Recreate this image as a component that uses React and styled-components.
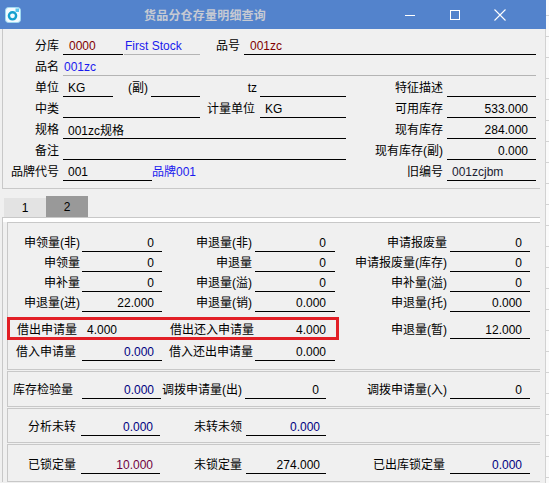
import React from 'react'
import styled, { createGlobalStyle } from 'styled-components'

const GlobalStyle = createGlobalStyle`
  html, body {
    margin: 0;
    padding: 0;
  }
  body {
    width: 549px;
    height: 483px;
    overflow: hidden;
    background: #fafafa;
    color: #000;
    font-family: "Liberation Sans", "Noto Sans CJK SC", sans-serif;
    font-size: 12px;
  }
`

const Screen = styled.div`
  display: flex;
  width: 549px;
  height: 483px;
  overflow: hidden;
`

const Window = styled.div`
  width: 546px;
  flex-shrink: 0;
  display: flex;
  flex-direction: column;
  background: #f0f0f0;
`

const TitleBar = styled.div`
  height: 29px;
  flex-shrink: 0;
  display: flex;
  align-items: center;
  padding-left: 5px;
  background: #5383cc;
`

const Title = styled.div`
  flex: 1;
  margin-left: 123px;
  color: #c6cad3;
  font-family: "Noto Sans CJK SC", sans-serif;
  font-size: 12px;
  font-weight: bold;
  letter-spacing: 0.2px;
`

const Controls = styled.div`
  display: flex;
  margin-right: 24px;
`

const CtrlButton = styled.div`
  width: 45px;
  height: 29px;
  display: flex;
  align-items: center;
  justify-content: center;
`

const Body = styled.div`
  flex: 1;
  padding: 0 5px 0 2px;
  border-right: 1px solid #d2d2d2;
`

const TopBox = styled.div`
  border-left: 1px solid #c8c8c8;
  border-bottom: 1px solid #c8c8c8;
  padding: 7px 0 5px 0;
`

const Row = styled.div`
  position: relative;
  display: flex;
  align-items: ${p => (p.$bottom ? 'flex-end' : 'flex-start')};
  height: ${p => p.$h || 21}px;
  padding-bottom: ${p => p.$pb || 0}px;
  box-sizing: border-box;
`

const Label = styled.div`
  width: ${p => p.$w}px;
  flex-shrink: 0;
  height: 19px;
  line-height: 20px;
  box-sizing: border-box;
  text-align: ${p => (p.$left ? 'left' : 'right')};
  padding-left: ${p => p.$pl || 0}px;
  padding-right: ${p => (p.$pr === undefined ? 4 : p.$pr)}px;
  white-space: nowrap;
`

const Field = styled.div`
  width: ${p => p.$w}px;
  flex-shrink: 0;
  height: 19px;
  box-sizing: border-box;
  display: flex;
  align-items: center;
  justify-content: ${p => (p.$right ? 'flex-end' : 'flex-start')};
  padding-top: 1px;
  padding-left: ${p => p.$pl || 0}px;
  padding-right: ${p => p.$pr || 0}px;
  border-bottom: 1px solid ${p => p.$line || '#000'};
  color: ${p => p.$c || '#000'};
  white-space: nowrap;
`

const Plain = styled.div`
  width: ${p => p.$w}px;
  flex-shrink: 0;
  height: 19px;
  line-height: 20px;
  box-sizing: border-box;
  color: ${p => p.$c || '#000'};
`

const Gap = styled.div`
  width: ${p => p.$w}px;
  flex-shrink: 0;
`

const TabBar = styled.div`
  display: flex;
  align-items: flex-end;
  height: 21px;
  margin-top: 7px;
  padding-left: 2px;
`

const Tab = styled.div`
  width: 42px;
  height: ${p => (p.$active ? 21 : 19)}px;
  line-height: ${p => (p.$active ? 22 : 20)}px;
  text-align: center;
  background: ${p => (p.$active ? '#999999' : '#e3e3e3')};
  color: #000;
`

const TabPanel = styled.div`
  border-top: 1px solid #c8c8c8;
  border-left: 1px solid #c8c8c8;
  padding: 4px 0 0 4px;
  background: linear-gradient(to bottom, #ffffff 0 4px, transparent 4px);
`

const GroupBox = styled.div`
  border: 1px solid #c8c8c8;
  border-right: none;
  margin-bottom: 1px;
  padding-top: ${p => p.$pt}px;
  padding-bottom: ${p => p.$pb}px;
`

const Highlight = styled.div`
  position: absolute;
  left: -1px;
  top: 4px;
  width: 332px;
  height: 23px;
  border: 3px solid #e21f26;
  box-sizing: border-box;
  pointer-events: none;
`

const BackStrip = styled.div`
  flex: 1;
  background-color: #fbfbfb;
  background-image: repeating-linear-gradient(
    to bottom,
    transparent 0 20px,
    #d4d4d4 20px 21px
  );
  background-position: 0 16px;
`

const AppIcon = () => (
  <svg width="16" height="16" viewBox="0 0 16 16">
    <rect x="0.5" y="0.5" width="15" height="15" rx="3" fill="#f3fbff" stroke="#9fd8f0" />
    <circle cx="7.5" cy="8.8" r="3.6" fill="none" stroke="#16a0cf" strokeWidth="2.4" />
    <rect x="10.5" y="1.5" width="3.5" height="3.5" fill="#58c8ef" />
  </svg>
)

const NAVY = '#000080'

// tab 2, first group: three label/value columns
const TabRow = ({ cells }) => (
  <Row $h={20}>
    <Label $w={74} $pr={2}>{cells[0]}</Label>
    <Field $w={80} $right $pr={8}>{cells[1]}</Field>
    <Label $w={93} $pr={3}>{cells[2]}</Label>
    <Field $w={80} $right $pr={9}>{cells[3]}</Field>
    <Label $w={115} $pr={3}>{cells[4]}</Label>
    <Field $w={80} $right $pr={8}>{cells[5]}</Field>
  </Row>
)

export default function App() {
  return (
    <Screen>
      <GlobalStyle />
      <Window>
        <TitleBar>
          <AppIcon />
          <Title>货品分仓存量明细查询</Title>
          <Controls>
            <CtrlButton>
              <svg width="10" height="10" viewBox="0 0 10 10">
                <line x1="0" y1="5.5" x2="10" y2="5.5" stroke="#fff" strokeWidth="1" />
              </svg>
            </CtrlButton>
            <CtrlButton>
              <svg width="10" height="10" viewBox="0 0 10 10">
                <rect x="0.5" y="0.5" width="9" height="9" fill="none" stroke="#fff" strokeWidth="1" />
              </svg>
            </CtrlButton>
            <CtrlButton>
              <svg width="12" height="12" viewBox="0 0 12 12">
                <path d="M0.5 0.5 L11.5 11.5 M11.5 0.5 L0.5 11.5" stroke="#fff" strokeWidth="1.1" />
              </svg>
            </CtrlButton>
          </Controls>
        </TitleBar>

        <Body>
          <TopBox>
            <Row>
              <Label $w={60}>分库</Label>
              <Field $w={60} $pl={6} $c="#800000">0000</Field>
              <Gap $w={1} />
              <Field $w={76} $pl={1} $line="#b4b4b4" $c="#1a1aee">First Stock</Field>
              <Label $w={44}>品号</Label>
              <Field $w={292} $pl={6} $c="#800000">001zc</Field>
            </Row>
            <Row>
              <Label $w={60}>品名</Label>
              <Field $w={473} $pl={1} $line="#b4b4b4" $c="#1a1aee">001zc</Field>
            </Row>
            <Row>
              <Label $w={60}>单位</Label>
              <Field $w={50} $pl={5}>KG</Field>
              <Label $w={38} $pr={3}>(副)</Label>
              <Field $w={49} />
              <Label $w={60} $pr={3}>tz</Label>
              <Field $w={86} />
              <Label $w={101}>特征描述</Label>
              <Field $w={89} />
            </Row>
            <Row>
              <Label $w={60}>中类</Label>
              <Field $w={137} />
              <Label $w={60} $pr={5}>计量单位</Label>
              <Field $w={86} $pl={5}>KG</Field>
              <Label $w={101}>可用库存</Label>
              <Field $w={89} $right $pr={8}>533.000</Field>
            </Row>
            <Row>
              <Label $w={60}>规格</Label>
              <Field $w={283} $pl={5}>001zc规格</Field>
              <Label $w={101}>现有库存</Label>
              <Field $w={89} $right $pr={8}>284.000</Field>
            </Row>
            <Row>
              <Label $w={60}>备注</Label>
              <Field $w={283} />
              <Label $w={101}>现有库存(副)</Label>
              <Field $w={89} $right $pr={8}>0.000</Field>
            </Row>
            <Row>
              <Label $w={60}>品牌代号</Label>
              <Field $w={89} $pl={5}>001</Field>
              <Plain $w={195} $c="#1a1aee">品牌001</Plain>
              <Label $w={100}>旧编号</Label>
              <Field $w={89} $pl={5} $c="#202030">001zcjbm</Field>
            </Row>
          </TopBox>

          <TabBar>
            <Tab>1</Tab>
            <Tab $active>2</Tab>
          </TabBar>

          <TabPanel>
            <GroupBox $pt={10} $pb={8}>
              <TabRow cells={['申领量(非)', '0', '申退量(非)', '0', '申请报废量', '0']} />
              <TabRow cells={['申领量', '0', '申退量', '0', '申请报废量(库存)', '0']} />
              <TabRow cells={['申补量', '0', '申退量(溢)', '0', '申补量(溢)', '0']} />
              <TabRow cells={['申退量(进)', '22.000', '申退量(销)', '0.000', '申退量(托)', '0.000']} />
              <Row $h={27} $bottom $pb={1}>
                <Label $w={74} $left $pl={9} $pr={0}>借出申请量</Label>
                <Field $w={80} $pl={5}>4.000</Field>
                <Label $w={93} $left $pl={8} $pr={0}>借出还入申请量</Label>
                <Field $w={80} $right $pr={9}>4.000</Field>
                <Label $w={115} $pr={3}>申退量(暂)</Label>
                <Field $w={80} $right $pr={8}>12.000</Field>
                <Highlight />
              </Row>
              <Row $h={21} $bottom>
                <Label $w={74} $left $pl={8} $pr={0}>借入申请量</Label>
                <Field $w={80} $right $pr={8} $c={NAVY}>0.000</Field>
                <Label $w={93} $left $pl={7} $pr={0}>借入还出申请量</Label>
                <Field $w={80} $right $pr={9}>0.000</Field>
              </Row>
            </GroupBox>

            <GroupBox $pt={8} $pb={6}>
              <Row $h={20}>
                <Label $w={74} $left $pl={5} $pr={0}>库存检验量</Label>
                <Field $w={79} $right $pr={7} $c={NAVY}>0.000</Field>
                <Label $w={84} $left $pl={1} $pr={0}>调拨申请量(出)</Label>
                <Field $w={81} $right $pr={7}>0</Field>
                <Label $w={124} $pr={3}>调拨申请量(入)</Label>
                <Field $w={80} $right $pr={8}>0</Field>
              </Row>
            </GroupBox>

            <GroupBox $pt={8} $pb={5}>
              <Row $h={20}>
                <Label $w={73} $pr={5}>分析未转</Label>
                <Field $w={79} $right $pr={7} $c={NAVY}>0.000</Field>
                <Label $w={86}>未转未领</Label>
                <Field $w={80} $right $pr={6} $c={NAVY}>0.000</Field>
              </Row>
            </GroupBox>

            <GroupBox $pt={10} $pb={6}>
              <Row $h={20}>
                <Label $w={73} $pr={5}>已锁定量</Label>
                <Field $w={79} $right $pr={7} $c="#700040">10.000</Field>
                <Label $w={86}>未锁定量</Label>
                <Field $w={80} $right $pr={6}>274.000</Field>
                <Label $w={124} $pr={5}>已出库锁定量</Label>
                <Field $w={80} $right $pr={8} $c={NAVY}>0.000</Field>
              </Row>
            </GroupBox>
          </TabPanel>
        </Body>
      </Window>
      <BackStrip />
    </Screen>
  )
}
